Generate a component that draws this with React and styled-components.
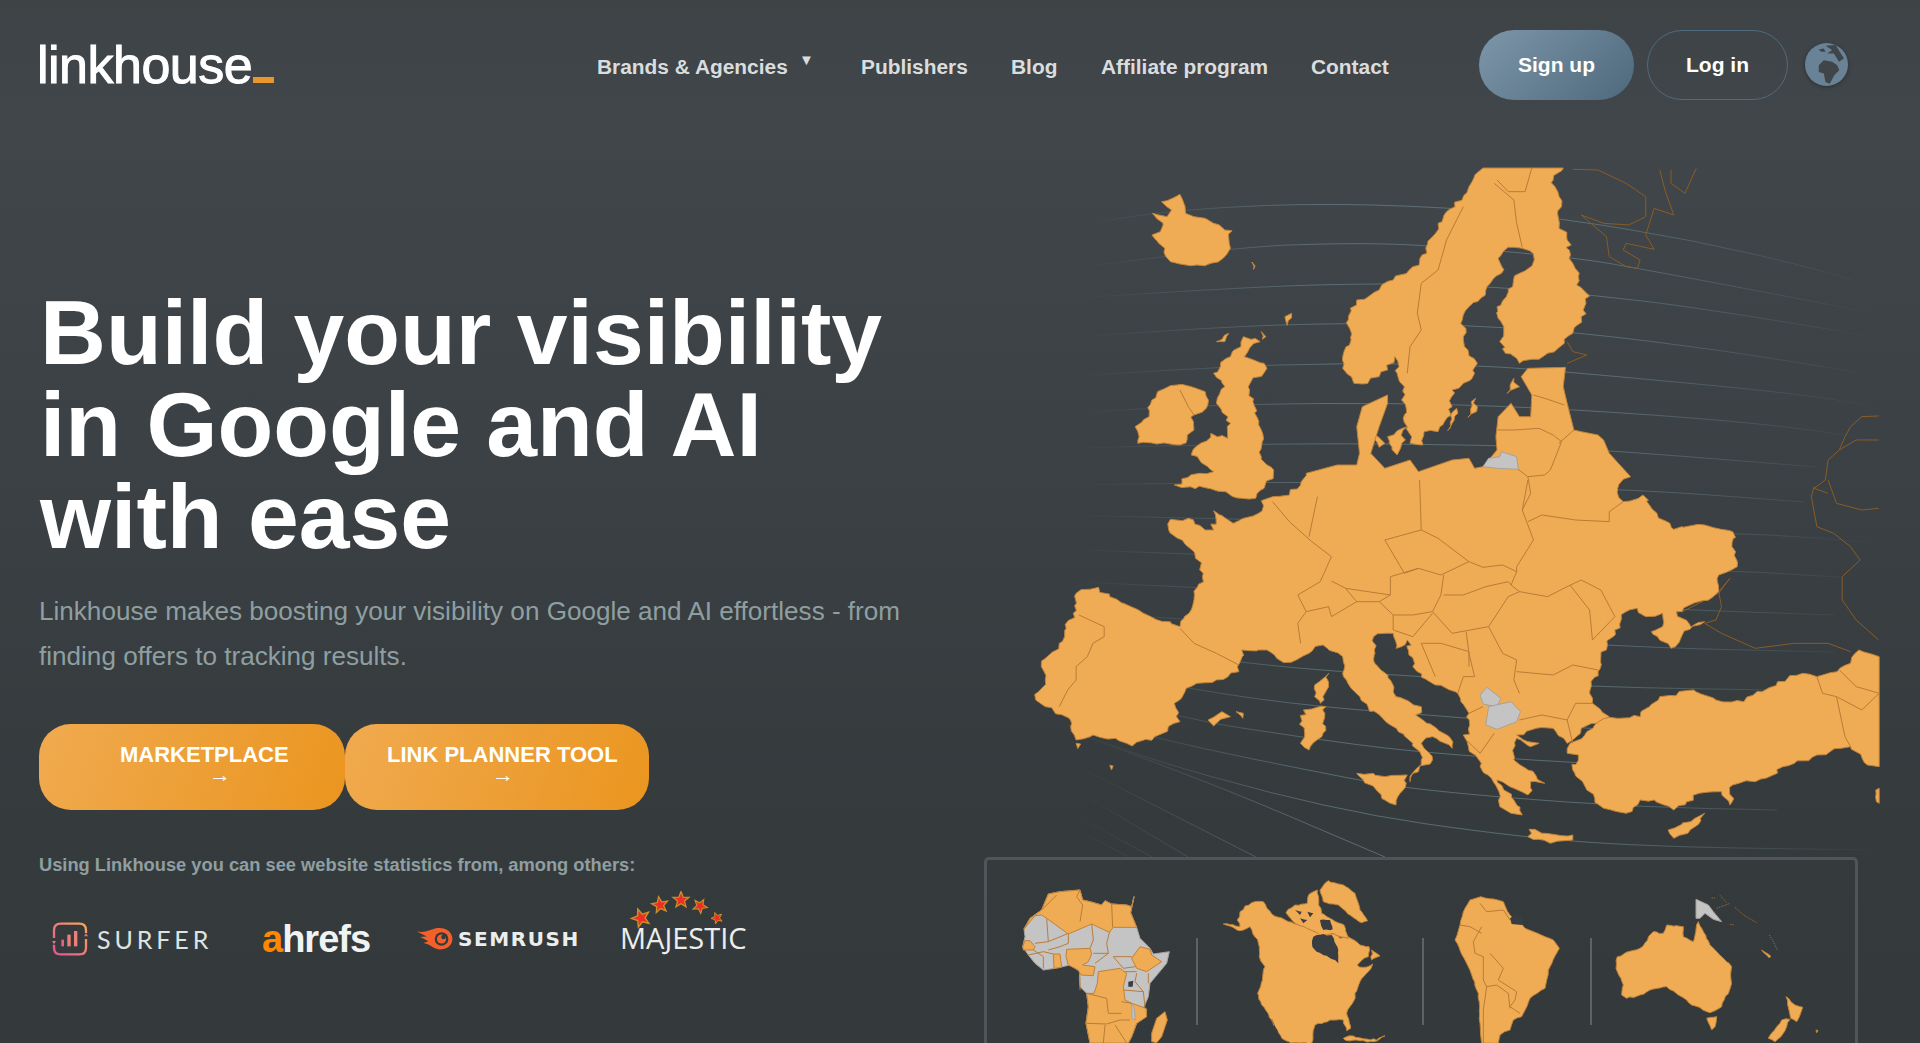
import React from "react";
import styled, { createGlobalStyle } from "styled-components";

const sans = `"Liberation Sans", Arial, sans-serif`;

const GlobalStyle = createGlobalStyle`
  html, body {
    margin: 0;
    height: 100%;
    overflow: hidden;
  }
  body {
    font-family: ${sans};
    background: #3a4043;
  }
`;

const NAV_ITEMS = [
  { label: "Brands & Agencies", width: 264, caret: true },
  { label: "Publishers", width: 150 },
  { label: "Blog", width: 90 },
  { label: "Affiliate program", width: 210 },
  { label: "Contact", width: 78 },
];

const GRID_LINES = [
  [[1100, 222], [1149, 212], [1300, 203], [1446, 207], [1559, 218], [1693, 240], [1822, 270], [1900, 295]],
  [[1060, 270], [1233, 247], [1345, 243], [1427, 245], [1570, 257], [1637, 268], [1895, 317]],
  [[1076, 298], [1244, 287], [1385, 283], [1497, 287], [1592, 295], [1693, 307], [1895, 340]],
  [[1076, 337], [1216, 327], [1345, 323], [1463, 325], [1575, 332], [1721, 350], [1862, 373]],
  [[1040, 378], [1216, 367], [1343, 363], [1475, 365], [1581, 373], [1834, 397], [1900, 415]],
  [[1076, 413], [1149, 408], [1256, 404], [1390, 403], [1530, 407], [1700, 418], [1817, 430], [1900, 445]],
  [[1076, 448], [1261, 443], [1497, 445], [1604, 450], [1817, 467]],
  [[1060, 485], [1211, 483], [1310, 482], [1615, 488], [1805, 502]],
  [[1050, 515], [1211, 518], [1733, 533], [1822, 538], [1900, 545]],
  [[1040, 548], [1194, 555], [1721, 570], [1839, 577]],
  [[1040, 580], [1200, 588], [1688, 610], [1834, 615]],
  [[1040, 610], [1200, 620], [1615, 647], [1834, 652]],
  [[1060, 640], [1242, 663], [1343, 672], [1430, 677], [1592, 687], [1772, 690], [1880, 692]],
  [[1060, 665], [1194, 690], [1317, 707], [1469, 718], [1600, 730], [1800, 738]],
  [[1040, 680], [1177, 718], [1300, 737], [1413, 752], [1575, 763], [1780, 772]],
  [[1060, 712], [1149, 738], [1357, 780], [1407, 788], [1497, 797], [1637, 807], [1777, 810]],
  [[1060, 722], [1093, 743], [1329, 810], [1525, 838], [1660, 847], [1879, 850]],
  [[1020, 713], [1188, 773], [1385, 857]],
  [[1020, 737], [1256, 857]],
  [[1020, 757], [1188, 857]],
  [[1020, 785], [1152, 857]],
  [[1020, 800], [1129, 857]],
];

// midpoint smoothing, good enough for these long arcs
const smooth = (pts) => {
  let d = `M${pts[0][0]} ${pts[0][1]}`;
  for (let i = 1; i < pts.length - 1; i++) {
    const mx = (pts[i][0] + pts[i + 1][0]) / 2;
    const my = (pts[i][1] + pts[i + 1][1]) / 2;
    d += ` Q${pts[i][0]} ${pts[i][1]} ${mx} ${my}`;
  }
  const last = pts[pts.length - 1];
  return `${d} L${last[0]} ${last[1]}`;
};

// breaks long edges up so the coastlines read as coastlines, not straight cuts.
// Map edges (the clipped top and right of the Europe map) stay straight.
const roughen = (points, step, amp) => {
  const pts = points.split(" ").map((p) => p.split(",").map(Number));
  const out = [];
  let n = 0;
  const wobble = () => {
    n += 1;
    return (Math.sin(n * 12.9898 + pts.length * 78.233) * 43758.5453) % 1;
  };
  pts.forEach((a, i) => {
    const b = pts[(i + 1) % pts.length];
    const onEdge = (a[0] >= 1531 && b[0] >= 1531) || (a[1] <= 24 && b[1] <= 24);
    out.push(a.join(","));
    if (onEdge) return;
    const parts = Math.floor(Math.hypot(b[0] - a[0], b[1] - a[1]) / step);
    for (let k = 1; k < parts; k++) {
      const x = a[0] + ((b[0] - a[0]) * k) / parts + wobble() * amp;
      const y = a[1] + ((b[1] - a[1]) * k) / parts + wobble() * amp;
      out.push(`${x.toFixed(1)},${y.toFixed(1)}`);
    }
  });
  return out.join(" ");
};

const NORTH_LAND = [
  "236,160 262,170 270,150 252,125 262,122 285,103 292,130 295,160 310,170 330,175 345,190 365,210 378,212 372,235 375,265 362,295 340,310 315,315 285,312 268,305 258,265 235,225 250,215 255,195",
  "825,24 968,24 950,60 965,140 960,180 975,240 985,310 995,350 992,375 1015,408 1000,470 985,520 970,550 940,580 890,610 885,595 865,580 855,545 862,500 850,440 878,380 890,340 915,305 908,272 870,262 852,295 858,340 830,390 800,440 788,480 790,540 792,560 815,610 810,640 790,670 770,690 770,740 745,815 720,815 718,855 695,850 690,800 680,720 685,680 672,640 668,590 655,630 640,650 610,672 595,670 575,625 575,590 590,540 585,480 600,420 640,390 665,360 700,320 725,280 735,230 745,190 775,140 800,80",
  "398,530 428,545 400,590 435,610 440,625 410,670 415,725 430,810 430,890 452,930 435,985 420,1015 395,1015 335,985 275,975 320,940 345,935 305,885 340,820 370,835 375,790 350,730 365,680 345,640 375,590",
  "245,695 280,675 305,680 330,695 332,745 310,765 310,810 285,855 210,850 205,800 230,770 235,720",
  "350,545 372,520 365,545",
  "430,515 438,530 432,538",
  "472,470 484,460 476,496",
  "413,306 419,318 416,328",
  "798,772 812,715 815,740",
  "762,812 778,745 770,790",
  "868,700 880,655 890,680",
  "630,820 650,850 640,862",
  "655,830 690,800 672,885",
];

const NORTH_BORDERS = [
  "790,140 760,240 745,330 715,370 708,460 715,510 695,560 690,640",
  "845,70 880,120 885,190 895,262",
  "850,60 870,95 900,95 912,24",
  "285,690 300,740 310,765",
];

const RUSSIA_NORTH = [
  "985,28 1030,30 1080,70 1115,110 1115,170 1085,195 1040,190 1000,165 1045,230 1050,290 1080,320 1100,325 1105,300 1075,270 1080,250 1130,268 1115,225 1130,145 1165,165 1150,95 1140,30",
  "1160,30 1160,70 1185,100 1205,25",
  "975,545 985,575 1010,585 975,610",
  "1530,768 1500,770 1480,800 1470,830 1460,870 1440,900 1435,960 1415,985 1440,1000",
  "1530,840 1490,840 1460,870",
];

const CONTINENT =
  "268,118 300,115 330,150 345,150 345,92 380,130 425,100 430,62 480,45 510,-20 565,-45 600,-45 605,-80 600,-160 610,-220 655,-255 655,-230 640,-160 625,-80 650,-35 695,-60 710,-25 770,-60 800,-65 810,-35 825,-40 850,-90 848,-130 852,-190 875,-230 890,-190 910,-190 912,-255 893,-310 905,-335 972,-338 968,-280 975,-230 987,-150 1000,-145 1030,-135 1040,-120 1050,-80 1088,-10 1065,25 1075,65 1110,45 1135,100 1165,148 1220,135 1270,155 1275,215 1278,260 1245,285 1245,335 1180,395 1170,395 1195,440 1220,425 1180,465 1160,505 1125,455 1145,440 1145,400 1115,410 1100,385 1080,395 1060,450 1045,510 1035,530 1030,575 1015,640 1020,670 1050,710 1035,730 1000,745 975,790 950,745 920,745 885,765 905,785 925,790 910,800 885,775 880,840 905,870 935,910 910,905 905,945 880,925 850,900 880,960 895,1005 875,1000 855,980 845,910 820,860 795,780 800,700 780,640 740,615 700,560 690,480 680,500 670,505 665,460 630,470 630,540 660,600 670,650 715,680 705,705 765,770 770,805 735,770 715,790 735,840 710,875 695,905 695,890 715,840 700,790 660,735 620,680 590,625 575,580 575,530 540,495 515,520 470,548 440,510 395,510 390,575 350,600 315,610 275,670 285,725 240,770 200,798 170,775 130,765 100,780 90,720 45,680 28,660 45,600 38,560 70,490 95,400 100,340 140,322 160,350 220,400 285,440 310,360 325,290 310,215 265,150";

const SOUTH_LAND = [
  "975,820 980,790 1010,755 1050,712 1105,710 1140,650 1200,630 1240,660 1290,665 1350,605 1395,580 1420,590 1480,550 1495,510 1531,530 1531,860 1510,855 1480,800 1420,825 1380,850 1310,905 1270,915 1265,975 1250,935 1210,940 1165,990 1130,960 1105,960 1080,1000 1040,985 1010,930 985,870 995,825",
  "1155,1050 1195,1025 1220,1000 1190,1060 1165,1075",
  "907,1048 930,1060 985,1065 985,1080 945,1090 905,1070",
  "600,880 650,890 690,885 670,975 650,960",
  "505,690 545,680 540,760 515,810 500,790",
  "525,615 550,580 550,620 535,670 525,650",
  "335,720 360,695 375,710 350,730 345,738",
  "385,695 398,700 397,715",
  "100,790 108,792 103,806",
  "160,856 166,858 163,870",
  "1525,930 1531,925 1531,970 1526,965",
];

const SOUTH_BORDERS = [
  "105,405 150,440 150,470 130,490 120,530 100,560 100,600 85,630 70,680",
  "285,445 310,490 350,520 390,555",
  "450,65 480,125 520,185 555,230 535,305 495,345 510,395 550,380 555,410 600,365 580,325 555,303",
  "530,50 515,170",
  "712,0 715,150 650,180 685,280 710,265 750,285 800,245 745,175 715,150",
  "905,0 895,90 915,180 885,260 885,275 875,315 890,335 940,350 975,320 1000,300 1035,330 1060,410 1020,480",
  "800,245 825,262 860,255 885,275",
  "905,125 930,105 990,120 1050,125 1050,95 1075,65",
  "980,315 1015,390 1020,480",
  "755,285 750,345 735,395 770,460 835,440 870,350 890,335",
  "755,345 790,345 830,320 870,305 875,315",
  "660,290 710,265",
  "660,290 660,345 640,365 665,405 700,405 735,395",
  "580,325 660,345",
  "600,365 640,365",
  "510,395 495,430 500,490",
  "665,405 665,450 700,470 720,430 735,400",
  "715,490 750,490 800,515 800,560",
  "715,490 740,590",
  "795,455 800,520 810,590 790,590 780,640",
  "835,440 860,520 885,540 880,600 890,640",
  "885,575 950,585 985,555 1030,570",
  "890,720 930,705 975,720 990,670 1020,670",
  "975,720 985,790",
  "800,700 825,680",
  "795,780 820,820 845,760",
  "1420,590 1430,640 1455,650 1470,770 1480,800",
  "1455,650 1500,690 1531,640",
  "1460,570 1490,620 1531,640",
  "915,-255 935,-245 970,-225",
  "850,-150 880,-150 925,-155 950,-135 965,-115 945,-30 935,-15 905,-10 885,-35",
  "987,-150 960,-110",
  "905,-10 910,40 895,90",
];

const RUSSIA_SOUTH = [
  "1415,20 1410,50 1420,140 1450,160 1480,200 1497,240 1465,290 1465,360 1490,420 1530,480",
  "1440,0 1455,70 1500,90 1530,85",
  "1220,430 1250,460 1310,505 1380,490 1440,490 1480,515",
  "1180,395 1245,340 1265,295 1245,335 1250,380 1240,420 1220,430",
];

const AFRICA_GRAY_LINES = [
  "200,205 205,275 165,280",
  "205,275 265,250",
  "265,250 265,280 240,290 205,300",
  "335,222 340,270 330,295",
  "340,310 385,310 380,280 390,240",
  "385,310 345,340",
  "400,320 440,320 455,320",
  "400,320 430,355 465,350",
  "435,365 470,365",
  "505,370 505,400",
  "470,370 465,395 490,425",
  "430,420 490,425 495,470",
  "160,300 190,320 190,355",
  "145,315 190,305 220,312",
  "300,380 300,420",
];

const AFRICA_ORANGE = [
  "132,237 150,205 185,180 205,132 240,125 300,120 308,150 330,155 365,165 375,152 395,162 440,165 455,170 462,140 452,188 470,232 400,232 388,247 335,222 265,252 200,205 185,195 165,197",
  "128,290 135,272 150,272 165,290 160,300 130,300",
  "220,312 240,312 245,352 222,355",
  "260,298 330,295 335,312 325,335 308,345 345,350 340,377 302,375 295,360 265,345 258,320",
  "480,290 510,298 515,315 545,335 500,365 470,355 455,325",
  "355,365 420,355 440,370 430,410 435,450 455,460 498,475 500,500 470,520 455,560 445,579 330,579 318,520 325,470 320,430 342,430 352,400",
  "555,485 562,510 545,560 530,578 515,575 515,550 530,505",
];

const AFRICA_ORANGE_LINES = [
  "230,135 185,180",
  "300,120 290,140 308,165 300,215",
  "395,162 398,232",
  "320,430 380,445 385,490",
  "320,520 380,522",
  "385,490 425,490",
  "380,522 420,510 450,510",
  "370,579 375,525",
  "425,455 455,460",
  "440,579 405,525",
];

const N_AMERICA = [
  "10,162 60,170 52,150 60,125 75,108 105,95 130,95 155,132 205,155 250,168 285,185 300,190 345,190 360,205 385,200 420,225 447,230 445,260 412,285 430,292 458,282 445,305 420,335 405,370 400,395 380,430 392,475 380,482 370,450 330,450 285,465 275,519 215,519 185,505 155,450 125,405 113,370 128,320 135,290 118,260 115,220 90,170 60,182",
  "198,128 225,105 262,100 268,72 292,60 296,105 305,130 330,145 372,165 385,205 360,200 340,190 300,195 260,175 225,160",
  "300,60 325,32 370,45 405,70 420,120 443,152 425,158 390,135 355,105 310,95",
  "455,240 480,258 455,270",
  "370,505 400,498 440,507 470,510 495,497 460,515 420,512 375,510",
];

const N_AMERICA_HOLES = [
  "280,200 300,195 335,195 355,240 355,280 345,270 290,245 277,230",
  "155,445 175,490 188,510 165,480",
  "225,120 245,125 240,135",
  "262,125 280,130 270,142",
  "240,145 262,150 250,160",
  "300,150 330,150 338,178 310,180",
];

const SOUTH_AMERICA =
  "735,115 750,90 782,80 850,95 870,135 915,175 1000,210 1018,235 985,300 975,355 930,385 905,440 880,450 870,480 840,495 835,519 785,519 780,460 775,370 745,290 705,210 720,165";

const SOUTH_AMERICA_LINES = [
  "780,100 800,125 850,120 870,150",
  "720,165 750,170 785,190",
  "785,170 760,215 765,250 790,260",
  "810,250 850,295 835,330 890,365 885,390 870,410 900,430",
  "790,260 790,330 800,350 830,345",
  "800,350 790,420 790,519",
  "830,345 865,370 870,415",
];

const OCEANIA = [
  "232,260 300,235 340,185 370,190 380,165 430,170 430,200 460,215 475,155 510,225 550,265 575,290 572,350 545,410 510,428 455,405 440,390 415,375 380,350 330,360 300,375 260,385 245,375 250,345 228,295",
  "500,445 530,440 525,470 515,480",
  "738,380 765,405 788,412 770,455 752,445 748,425",
  "725,450 750,448 730,490 705,515 685,505 710,470",
  "665,240 692,258 688,264",
  "828,480 834,482 830,488",
];

const OCEANIA_SPECKS = [
  "530,115 570,100",
  "585,112 610,135 650,158",
  "688,195 700,215 712,240",
  "515,84 525,84",
  "540,76 560,98",
  "570,163 582,165",
];

const STARS = [
  [21, 27, 0.95, -20],
  [40, 14, 0.85, -10],
  [61, 9, 0.85, 0],
  [80, 15, 0.75, 30],
  [97, 27, 0.6, 50],
];

const starPoints = "0,-10 2.6,-3.4 9.5,-3.1 4.1,1.3 5.9,8.1 0,4.3 -5.9,8.1 -4.1,1.3 -9.5,-3.1 -2.6,-3.4";

const Coast = ({ points, step = 11, amp = 6, ...rest }) => (
  <Land points={roughen(points, step, amp)} {...rest} />
);

function App() {
  return (
    <Page>
      <GlobalStyle />
      <Header>
        <Logo>
          linkhouse<LogoMark />
        </Logo>
        <Nav>
          {NAV_ITEMS.map((item) => (
            <NavItem key={item.label} $width={item.width}>
              {item.label}
              {item.caret && <Caret>▼</Caret>}
            </NavItem>
          ))}
        </Nav>
        <Actions>
          <SignUpButton>Sign up</SignUpButton>
          <LogInButton>Log in</LogInButton>
          <Globe viewBox="44 39 128 128">
            <circle cx="108" cy="103" r="64" fill="#6a8296" />
            <path d="M85 105 L100 90 L125 95 L140 105 L146 120 L131 135 L118 160 L105 155 L100 130 L85 125 Z" fill="#3f4548" />
            <path d="M85 58 L100 55 L105 65 L92 65 Z M105 47 L135 45 L160 85 L145 95 L130 70 L110 70 L125 60 Z" fill="#3f4548" />
          </Globe>
        </Actions>
      </Header>

      <Hero>
        <Intro>
          <Title>
            Build your visibility
            <br />
            in Google and AI
            <br />
            with ease
          </Title>
          <Lead>
            Linkhouse makes boosting your visibility on Google and AI effortless - from
            <br />
            finding offers to tracking results.
          </Lead>
          <Cta>
            <CtaButton $width={306} $pad={81}>
              MARKETPLACE
              <CtaArrow $shift={89}>→</CtaArrow>
            </CtaButton>
            <CtaButton $width={304} $pad={42}>
              LINK PLANNER TOOL
              <CtaArrow $shift={105}>→</CtaArrow>
            </CtaButton>
          </Cta>
          <Caption>Using Linkhouse you can see website statistics from, among others:</Caption>
          <Partners>
            <Partner $width={223} $pad={13}>
              <svg width="36" height="36" viewBox="36 126 108 104">
                <defs>
                  <linearGradient id="surferGrad" x1="0" y1="1" x2="1" y2="0">
                    <stop offset="0" stopColor="#e8528f" />
                    <stop offset="1" stopColor="#f3a860" />
                  </linearGradient>
                </defs>
                <path d="M42 175 L42 152 Q42 132 62 132 L118 132 Q138 132 138 152 L138 160 M138 178 L138 204 Q138 224 118 224 L62 224 Q42 224 42 204 L42 195" fill="none" stroke="url(#surferGrad)" strokeWidth="7" />
                <path d="M36 184 L48 184 L42 194 Z M132 170 L144 170 L138 160 Z" fill="#ea6f7f" />
                <rect x="64" y="180" width="8" height="20" fill="#e8607f" />
                <rect x="82" y="165" width="10" height="35" fill="#ee7f78" />
                <rect x="102" y="154" width="10" height="46" fill="#ee7f78" />
              </svg>
              <SurferName>SURFER</SurferName>
            </Partner>
            <Partner $width={155}>
              <AhrefsName>
                <span>a</span>hrefs
              </AhrefsName>
            </Partner>
            <Partner $width={203} $gap={5}>
              <svg width="36" height="24" viewBox="50 142 110 72">
                <path d="M50 155 C75 160 90 150 105 146 C135 140 158 155 158 178 C158 198 140 210 120 210 C105 210 95 200 85 195 L70 190 L85 185 L60 172 L80 170 Z" fill="#f4602a" />
                <circle cx="125" cy="178" r="21" fill="#343a3c" />
                <circle cx="125" cy="178" r="14" fill="#f4602a" />
                <circle cx="131" cy="172" r="7" fill="#343a3c" />
              </svg>
              <SemrushName>SEMRUSH</SemrushName>
            </Partner>
            <MajesticLogo>
              <svg width="128" height="38" viewBox="0 0 128 38">
                {STARS.map(([x, y, s, r]) => (
                  <polygon
                    key={x}
                    points={starPoints}
                    transform={`translate(${x} ${y}) rotate(${r}) scale(${s})`}
                    fill="#ee2e24"
                    stroke="#c8902a"
                    strokeWidth="1.5"
                  />
                ))}
              </svg>
              <MajesticName>MAJESTIC</MajesticName>
            </MajesticLogo>
          </Partners>
        </Intro>

        <Maps>
          <EuropeMap viewBox="1020 168 880 689">
            <defs>
              <linearGradient id="gridFade" gradientUnits="userSpaceOnUse" x1="1020" y1="0" x2="1900" y2="0">
                <stop offset="0.06" stopColor="#6f8b93" stopOpacity="0" />
                <stop offset="0.35" stopColor="#6f8b93" stopOpacity="0.6" />
                <stop offset="0.65" stopColor="#6f8b93" stopOpacity="0.6" />
                <stop offset="0.98" stopColor="#6f8b93" stopOpacity="0" />
              </linearGradient>
            </defs>
            {GRID_LINES.map((pts, i) => (
              <path key={i} d={smooth(pts)} fill="none" stroke="url(#gridFade)" strokeWidth="1" />
            ))}
            <g transform="translate(1020 160) scale(.5612 .3333)">
              {RUSSIA_NORTH.map((p) => (
                <OutlineOnly key={p} points={p} />
              ))}
              {NORTH_LAND.map((p) => (
                <Coast key={p} points={p} />
              ))}
              {NORTH_BORDERS.map((p) => (
                <Border key={p} points={p} />
              ))}
            </g>
            <g transform="translate(1020 480) scale(.5612 .3333)">
              {RUSSIA_SOUTH.map((p) => (
                <OutlineOnly key={p} points={p} />
              ))}
              <Coast points={CONTINENT} />
              {SOUTH_LAND.map((p) => (
                <Coast key={p} points={p} />
              ))}
              {SOUTH_BORDERS.map((p) => (
                <Border key={p} points={p} />
              ))}
              <Land $gray points="825,-40 835,-65 855,-70 858,-85 885,-70 888,-32 850,-35" />
              <Land $gray points="832,622 857,655 850,680 825,672 820,645" />
              <Land $gray points="835,680 875,665 892,695 885,725 850,748 830,735" />
            </g>
          </EuropeMap>

          <Regions>
            <Region $width={209} viewBox="21 30 627 549">
              <Land $gray points="132,237 150,205 185,180 205,132 240,125 300,120 308,150 330,155 365,165 375,152 395,162 440,165 455,170 462,140 452,188 470,232 480,265 510,295 520,312 568,305 560,340 510,400 505,440 490,475 500,478 498,500 470,520 455,560 445,579 330,579 318,520 325,470 320,430 300,410 298,385 300,365 270,345 225,355 190,360 165,340 145,315 128,290 135,260" />
              {AFRICA_GRAY_LINES.map((p) => (
                <Border key={p} points={p} />
              ))}
              {AFRICA_ORANGE.map((p) => (
                <Land key={p} points={p} />
              ))}
              {AFRICA_ORANGE_LINES.map((p) => (
                <Border key={p} points={p} />
              ))}
              <Land $gray points="455,462 462,472 466,510 456,505" />
              <Hole points="445,395 460,392 458,410 445,410" />
            </Region>
            <Divider />
            <Region $width={224} viewBox="-66 -30 672 549">
              {N_AMERICA.map((p) => (
                <Coast key={p} points={p} step={9} amp={3} />
              ))}
              {N_AMERICA_HOLES.map((p) => (
                <Hole key={p} points={roughen(p, 9, 3)} />
              ))}
            </Region>
            <Divider />
            <Region $width={166} viewBox="612 -30 498 549">
              <Coast points={SOUTH_AMERICA} step={12} amp={2} />
              {SOUTH_AMERICA_LINES.map((p) => (
                <Border key={p} points={p} />
              ))}
              <Hole points="870,145 890,132 910,145 905,165 875,162" />
            </Region>
            <Divider />
            <Region $width={263} viewBox="156 -30 789 549">
              {OCEANIA.map((p) => (
                <Coast key={p} points={p} step={10} amp={2.5} />
              ))}
              <Land $gray points="468,88 505,105 520,125 545,155 520,148 495,130 480,145 468,145" />
              {OCEANIA_SPECKS.map((p) => (
                <Speck key={p} points={p} />
              ))}
            </Region>
          </Regions>
        </Maps>
      </Hero>
    </Page>
  );
}

export default App;

const Page = styled.div`
  height: 1043px;
  overflow: hidden;
  color: #fff;
  background: linear-gradient(180deg, #3e4346 0%, #40464a 12%, #353b3d 78%, #343a3c 100%);
`;

const Header = styled.header`
  height: 130px;
  box-sizing: border-box;
  padding: 30px 72px 0 37px;
  display: flex;
  align-items: flex-start;
`;

const Logo = styled.div`
  width: 560px;
  font-size: 52px;
  line-height: 70px;
  letter-spacing: -0.5px;
  -webkit-text-stroke: 1px #fff;
  color: #fff;
  display: flex;
  align-items: baseline;
`;

const LogoMark = styled.i`
  display: inline-block;
  width: 21px;
  height: 6px;
  margin-left: 1px;
  background: #e9962a;
`;

const Nav = styled.nav`
  display: flex;
  width: 882px;
  height: 70px;
  align-items: center;
  padding-top: 4px;
  box-sizing: border-box;
`;

const NavItem = styled.a`
  width: ${(p) => p.$width}px;
  flex: none;
  font-size: 20.9px;
  font-weight: 700;
  color: #d9dddd;
  white-space: nowrap;
  position: relative;
`;

const Caret = styled.span`
  position: absolute;
  left: 202px;
  top: -4px;
  font-size: 15px;
  color: #d9dddd;
`;

const Actions = styled.div`
  display: flex;
  align-items: center;
  gap: 13px;
`;

const SignUpButton = styled.button`
  width: 155px;
  height: 70px;
  border: none;
  border-radius: 35px;
  background: linear-gradient(135deg, #7d96a9 0%, #4f697c 100%);
  color: #fff;
  font: 700 21px ${sans};
`;

const LogInButton = styled.button`
  width: 141px;
  height: 70px;
  border: 1px solid #4f6b7e;
  border-radius: 35px;
  background: transparent;
  color: #fff;
  font: 700 21px ${sans};
`;

const Globe = styled.svg`
  width: 43px;
  height: 43px;
  margin: -2px 0 0 4px;
  filter: drop-shadow(0 1px 2px rgba(0, 0, 0, 0.3));
`;

const Hero = styled.main`
  display: flex;
  align-items: flex-start;
  padding-top: 38px;
`;

const Intro = styled.section`
  width: 984px;
  flex: none;
  box-sizing: border-box;
  padding: 118px 0 0 39px;
`;

const Title = styled.h1`
  margin: 0 0 0 1px;
  font-size: 91.3px;
  line-height: 92px;
  font-weight: 700;
  color: #fff;
  white-space: nowrap;
`;

const Lead = styled.p`
  margin: 27px 0 0;
  font-size: 26.1px;
  line-height: 45px;
  color: #8f9fa1;
  white-space: nowrap;
`;

const Cta = styled.div`
  display: flex;
  margin-top: 45px;
`;

const CtaButton = styled.button`
  width: ${(p) => p.$width}px;
  height: 86px;
  padding: 21px 0 0 ${(p) => p.$pad}px;
  box-sizing: border-box;
  border: none;
  border-radius: 32px;
  background: linear-gradient(110deg, #f0aa4f 0%, #ea951f 100%);
  color: #fff;
  font: 700 22px/20px ${sans};
  text-align: left;
  display: flex;
  flex-direction: column;
  align-items: flex-start;
`;

const CtaArrow = styled.span`
  margin-left: ${(p) => p.$shift}px;
`;

const Caption = styled.p`
  margin: 44px 0 0;
  font-size: 18.3px;
  line-height: 22px;
  font-weight: 700;
  color: #8f9fa1;
`;

const Partners = styled.div`
  display: flex;
  align-items: center;
  height: 70px;
  margin-top: 14px;
`;

const Partner = styled.div`
  width: ${(p) => p.$width}px;
  flex: none;
  box-sizing: border-box;
  padding-left: ${(p) => p.$pad || 0}px;
  display: flex;
  align-items: center;
  gap: ${(p) => p.$gap || 9}px;
  margin-top: 28px;
`;

const SurferName = styled.span`
  font: 400 25px "Lato", sans-serif;
  letter-spacing: 3.9px;
  color: #dfe2e2;
`;

const AhrefsName = styled.span`
  font: 700 38px ${sans};
  letter-spacing: -1px;
  color: #f1f2f2;
  span {
    color: #ff8800;
  }
`;

const SemrushName = styled.span`
  font: 700 20px "DejaVu Sans", sans-serif;
  letter-spacing: 1.6px;
  color: #eceeee;
`;

const MajesticLogo = styled.div`
  display: flex;
  flex-direction: column;
  align-items: flex-start;
  width: 128px;
  margin-top: -8px;
`;

const MajesticName = styled.span`
  font: 500 29px/26px "Open Sans", sans-serif;
  color: #eceeee;
  margin-top: -4px;
`;

const Maps = styled.aside`
  width: 874px;
  flex: none;
  display: flex;
  flex-direction: column;
`;

const EuropeMap = styled.svg`
  width: 880px;
  height: 689px;
  margin-left: 36px;
  display: block;
  flex: none;
  overflow: visible;
`;

const Regions = styled.div`
  display: flex;
  align-items: flex-start;
  box-sizing: border-box;
  width: 874px;
  height: 260px;
  border: 3px solid #4f5558;
  border-radius: 5px;
`;

const Region = styled.svg`
  width: ${(p) => p.$width}px;
  height: 183px;
  flex: none;
  display: block;
`;

const Divider = styled.div`
  width: 2px;
  height: 87px;
  margin-top: 78px;
  flex: none;
  background: #5c6366;
`;

const Land = styled.polygon`
  fill: ${(p) => (p.$gray ? "#c4c4c4" : "#f0ac54")};
  stroke: ${(p) => (p.$gray ? "#a8a29a" : "#c08238")};
  stroke-width: 1px;
  stroke-linejoin: round;
  vector-effect: non-scaling-stroke;
`;

const Hole = styled.polygon`
  fill: #373d40;
`;

const Border = styled.polyline`
  fill: none;
  stroke: #b87c38;
  stroke-width: 1px;
  vector-effect: non-scaling-stroke;
`;

const OutlineOnly = styled.polyline`
  fill: none;
  stroke: #8a5c26;
  stroke-width: 1px;
  vector-effect: non-scaling-stroke;
`;

const Speck = styled.polyline`
  fill: none;
  stroke: #c08238;
  stroke-width: 2px;
  stroke-dasharray: 4 3;
`;
